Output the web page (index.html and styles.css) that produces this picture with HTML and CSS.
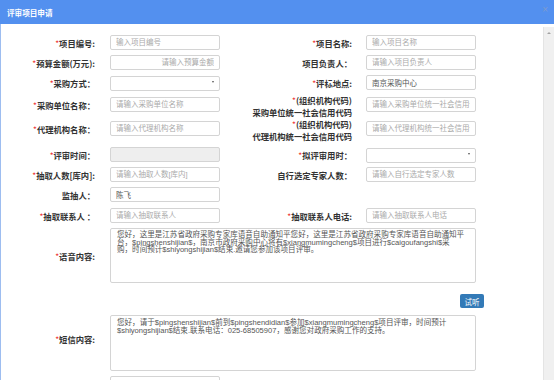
FILE: index.html
```html
<!DOCTYPE html>
<html lang="zh-CN">
<head>
    <meta charset="UTF-8">
    <title>评审项目申请</title>
    <link rel="stylesheet" href="styles.css">
</head>
<body>
    <div class="dialog">
        <div class="dialog-head">
            <span class="dialog-title">评审项目申请</span>
            <span class="dialog-close">×</span>
        </div>
        <div class="dialog-body">
            <div class="form-area">
                <div class="row">
                    <label class="lbl"><i>*</i>项目编号:</label>
                    <input class="ipt" type="text" placeholder="输入项目编号">
                    <label class="lbl"><i>*</i>项目名称:</label>
                    <input class="ipt" type="text" placeholder="输入项目名称">
                </div>
                <div class="row">
                    <label class="lbl"><i>*</i>预算金额(万元):</label>
                    <input class="ipt ipt-right" type="text" placeholder="请输入预算金额">
                    <label class="lbl">项目负责人：</label>
                    <input class="ipt" type="text" placeholder="请输入项目负责人">
                </div>
                <div class="row">
                    <label class="lbl"><i>*</i>采购方式：</label>
                    <div class="sel"><select></select></div>
                    <label class="lbl"><i>*</i>评标地点:</label>
                    <input class="ipt" type="text" value="南京采购中心">
                </div>
                <div class="row gap-7">
                    <label class="lbl"><i>*</i>采购单位名称：</label>
                    <input class="ipt" type="text" placeholder="请输入采购单位名称">
                    <label class="lbl two-line"><span><i>*</i>(组织机构代码)</span><span>采购单位统一社会信用代码</span></label>
                    <input class="ipt" type="text" placeholder="请输入采购单位统一社会信用代码">
                </div>
                <div class="row gap-9">
                    <label class="lbl"><i>*</i>代理机构名称：</label>
                    <input class="ipt" type="text" placeholder="请输入代理机构名称">
                    <label class="lbl two-line"><span><i>*</i>(组织机构代码)</span><span>代理机构统一社会信用代码</span></label>
                    <input class="ipt" type="text" placeholder="请输入代理机构统一社会信用代码">
                </div>
                <div class="row gap-11">
                    <label class="lbl"><i>*</i>评审时间：</label>
                    <input class="ipt" type="text" disabled>
                    <label class="lbl"><i>*</i>拟评审用时：</label>
                    <div class="sel"><select></select></div>
                </div>
                <div class="row">
                    <label class="lbl"><i>*</i>抽取人数[库内]:</label>
                    <input class="ipt" type="text" placeholder="请输入抽取人数[库内]">
                    <label class="lbl">自行选定专家人数：</label>
                    <input class="ipt" type="text" placeholder="请输入自行选定专家人数">
                </div>
                <div class="row">
                    <label class="lbl">监抽人：</label>
                    <input class="ipt" type="text" value="陈飞">
                </div>
                <div class="row gap-6">
                    <label class="lbl"><i>*</i>抽取联系人 ：</label>
                    <input class="ipt" type="text" placeholder="请输入抽取联系人">
                    <label class="lbl"><i>*</i>抽取联系人电话:</label>
                    <input class="ipt" type="text" placeholder="请输入抽取联系人电话">
                </div>

                <div class="row-wide voice">
                    <label class="lbl"><i>*</i>语音内容:</label>
                    <textarea class="txt" wrap="off">您好，这里是江苏省政府采购专家库语音自助通知平您好，这里是江苏省政府采购专家库语音自助通知平
台，$pingshenshijian$，南京市政府采购中心将有$xiangmumingcheng$项目进行$caigoufangshi$采
购，时间预计$shiyongshijian$结束.邀请您参加该项目评审。</textarea>
                </div>
                <div class="btn-row">
                    <button class="btn">试听</button>
                </div>
                <div class="row-wide sms">
                    <label class="lbl"><i>*</i>短信内容:</label>
                    <textarea class="txt" wrap="off">您好，请于$pingshenshijian$前到$pingshendidian$参加$xiangmumingcheng$项目评审，时间预计
$shiyongshijian$结束.联系电话：025-68505907，感谢您对政府采购工作的支持。</textarea>
                </div>
                <div class="row-wide next">
                    <label class="lbl"></label>
                    <input class="ipt" type="text">
                </div>
            </div>
            <div class="scrollbar">
                <span class="scroll-up"></span>
            </div>
        </div>
    </div>
</body>
</html>
```

FILE: styles.css
```css
body {
    margin: 0;
    font-family: "Liberation Sans", "Noto Sans CJK SC", sans-serif;
    background: #fff;
}

.dialog {
    width: 554px;
    height: 380px;
    display: flex;
    flex-direction: column;
    overflow: hidden;
}

.dialog-head {
    height: 24px;
    flex-shrink: 0;
    background: #5390ef;
    display: flex;
    align-items: center;
    justify-content: space-between;
    padding: 0 6px 0 7px;
}

.dialog-title {
    color: #fff;
    font-size: 7.6px;
    font-weight: bold;
}

.dialog-close {
    color: #7d9bcf;
    font-size: 10px;
    margin-top: -6px;
}

.dialog-body {
    flex: 1;
    display: flex;
    padding-top: 3px;
    border-left: 1px solid #9dbdf0;
    min-height: 0;
}

.form-area {
    flex: 1;
    padding-top: 8px;
    overflow: hidden;
}

.scrollbar {
    width: 10px;
    background: #f0f0f0;
    border-left: 1px solid #e4e4e4;
    display: flex;
    justify-content: center;
    padding-top: 5px;
}

.scroll-up {
    width: 0;
    height: 0;
    border-left: 2px solid transparent;
    border-right: 2px solid transparent;
    border-bottom: 2px solid #a3a3a3;
}

.row {
    display: grid;
    grid-template-columns: 109px 110px 146px 110px;
    grid-template-rows: 15px;
    height: 15px;
    margin-top: 5px;
    align-items: center;
}

.row:first-child { margin-top: 0; }
.row.gap-7 { margin-top: 7px; }
.row.gap-9 { margin-top: 9px; }
.row.gap-11 { margin-top: 11px; }
.row.gap-6 { margin-top: 6px; }

.lbl {
    text-align: right;
    font-size: 8.3px;
    font-weight: bold;
    color: #333;
    white-space: nowrap;
    font-family: "Noto Sans CJK SC", sans-serif;
}

.row .lbl:nth-child(1) { padding-right: 15px; }
.row .lbl:nth-child(3) { padding-right: 14px; }

.lbl i {
    font-style: normal;
    font-weight: normal;
    color: #e33;
}

.two-line {
    align-self: start;
    height: 15px;
    padding-top: 2px;
    display: flex;
    flex-direction: column;
    justify-content: center;
    align-items: flex-end;
    line-height: 11.5px;
}

.ipt {
    box-sizing: border-box;
    width: 110px;
    height: 15px;
    margin: 0;
    padding: 0 5px;
    border: 1px solid #d4d4d4;
    border-radius: 2px;
    font-size: 7.5px;
    color: #555;
    font-family: "Liberation Sans", "Noto Sans CJK SC", sans-serif;
    outline: none;
}

.ipt::placeholder {
    color: #aaa;
}

.ipt-right {
    text-align: right;
}

.ipt:disabled {
    background: #eee;
    border-color: #d4d4d4;
}

.sel {
    position: relative;
    width: 110px;
    height: 15px;
}

.sel select {
    appearance: none;
    box-sizing: border-box;
    width: 100%;
    height: 100%;
    margin: 0;
    border: 1px solid #d4d4d4;
    border-radius: 2px;
    background: #fff;
}

.sel::after {
    content: "";
    position: absolute;
    right: 6px;
    top: 6px;
    border-left: 1.5px solid transparent;
    border-right: 1.5px solid transparent;
    border-top: 2px solid #555;
}

.row-wide {
    display: grid;
    grid-template-columns: 109px 366px;
    align-items: center;
}

.row-wide .lbl {
    padding-right: 15px;
}

.txt {
    box-sizing: border-box;
    width: 366px;
    margin: 0;
    padding: 2px 6px;
    border: 1px solid #d4d4d4;
    border-radius: 2px;
    font-size: 7.55px;
    line-height: 7.7px;
    color: #555;
    font-family: "Liberation Sans", "Noto Sans CJK SC", sans-serif;
    resize: none;
    overflow: hidden;
    outline: none;
}

.voice {
    margin-top: 5px;
}

.voice .txt { height: 55px; }

.sms {
    margin-top: 7px;
}

.sms .txt {
    height: 56px;
    padding-top: 3px;
    line-height: 8px;
}

.sms .lbl {
    margin-top: -9px;
}

.btn-row {
    width: 483px;
    display: flex;
    justify-content: flex-end;
    margin-top: 11px;
}

.btn {
    width: 24px;
    height: 14px;
    padding: 0;
    border: none;
    border-radius: 2px;
    background: #337ab7;
    color: #fff;
    font-size: 7.5px;
    font-family: "Noto Sans CJK SC", sans-serif;
}

.next {
    margin-top: 5px;
}
```
